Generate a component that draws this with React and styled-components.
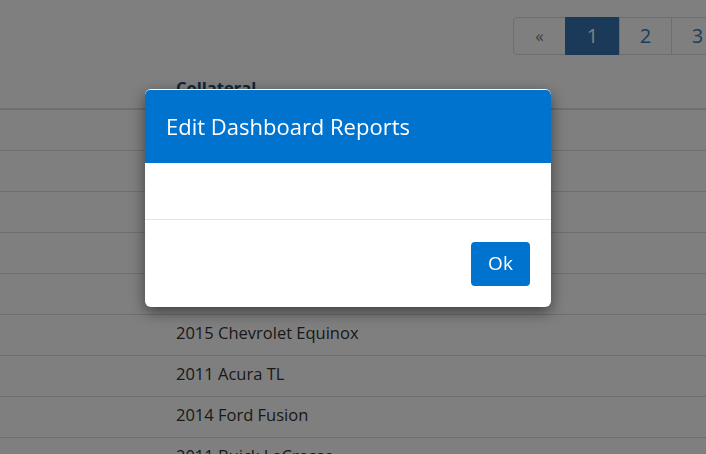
import styled, { createGlobalStyle } from "styled-components";

const GlobalStyle = createGlobalStyle`
  html, body {
    margin: 0;
    padding: 0;
    background: #fff;
    overflow: hidden;
    font-family: "Open Sans", "Liberation Sans", sans-serif;
    color: #333;
  }
`;

const Page = styled.div`
  width: 706px;
  height: 454px;
  overflow: hidden;
`;

const PagerRow = styled.div`
  display: flex;
  padding: 17px 0 0 514px;
  margin-bottom: 15px;
  white-space: nowrap;
`;

const PageCell = styled.a`
  flex-shrink: 0;
  box-sizing: border-box;
  width: ${(p) => p.$w}px;
  height: 38px;
  line-height: 36px;
  text-align: center;
  font-size: ${(p) => (p.$arrow ? "17px" : "20px")};
  color: ${(p) => (p.$active ? "#fff" : p.$arrow ? "#777" : "#337ab7")};
  background: ${(p) => (p.$active ? "#3674b4" : "#fff")};
  border: 1px solid ${(p) => (p.$active ? "#3674b4" : "#ddd")};
  margin-left: -1px;
  border-radius: ${(p) => (p.$first ? "4px 0 0 4px" : "0")};
`;

const Table = styled.table`
  width: 100%;
  border-collapse: collapse;
  font-size: 16.5px;
`;

const Th = styled.th`
  text-align: left;
  padding: 7px 8px 9px;
  line-height: 22px;
  font-weight: 700;
  color: #23466e;
  border-bottom: 2px solid #ddd;
  width: ${(p) => (p.$w ? `${p.$w}px` : "auto")};
`;

const Td = styled.td`
  padding: 7px 8px 11px;
  line-height: 22px;
  border-top: 1px solid #ddd;
  color: #333;
`;

const Overlay = styled.div`
  position: fixed;
  inset: 0;
  background: rgba(0, 0, 0, 0.5);
  padding: 89px 0 0 145px;
`;

const Dialog = styled.div`
  width: 406px;
  box-sizing: border-box;
  background: #fff;
  border-radius: 6px;
  padding-top: 1px;
  box-shadow: 0 5px 15px rgba(0, 0, 0, 0.5);
  overflow: hidden;
`;

const DialogHeader = styled.div`
  background: #0073cf;
  color: #fff;
  padding: 21px 21px 22px;
  border-radius: 5px 5px 0 0;
`;

const DialogTitle = styled.h4`
  margin: 0;
  font-size: 22px;
  font-weight: 400;
  line-height: 30px;
`;

const DialogBody = styled.div`
  height: 56px;
`;

const DialogFooter = styled.div`
  display: flex;
  justify-content: flex-end;
  padding: 22px 21px 21px;
  border-top: 1px solid #e5e5e5;
`;

const OkButton = styled.button`
  width: 59px;
  height: 44px;
  padding: 0 0 2px;
  border: none;
  border-radius: 4px;
  background: #0073cf;
  color: #fff;
  font-family: "Open Sans", "Liberation Sans", sans-serif;
  font-size: 19px;
  cursor: pointer;
`;

const rows = [
  "",
  "",
  "",
  "",
  "",
  "2015 Chevrolet Equinox",
  "2011 Acura TL",
  "2014 Ford Fusion",
  "2011 Buick LaCrosse",
];

const pages = [
  { label: "«", w: 53, arrow: true, first: true },
  { label: "1", w: 55, active: true },
  { label: "2", w: 53 },
  { label: "3", w: 53 },
  { label: "4", w: 53 },
];

export default function App() {
  return (
    <Page>
      <GlobalStyle />
      <PagerRow>
        {pages.map((p) => (
          <PageCell
            key={p.label}
            $w={p.w}
            $arrow={p.arrow}
            $active={p.active}
            $first={p.first}
          >
            {p.label}
          </PageCell>
        ))}
      </PagerRow>
      <Table>
        <thead>
          <tr>
            <Th $w={152}></Th>
            <Th>Collateral</Th>
          </tr>
        </thead>
        <tbody>
          {rows.map((r, i) => (
            <tr key={i}>
              <Td>&nbsp;</Td>
              <Td>{r}</Td>
            </tr>
          ))}
        </tbody>
      </Table>
      <Overlay>
        <Dialog>
          <DialogHeader>
            <DialogTitle>Edit Dashboard Reports</DialogTitle>
          </DialogHeader>
          <DialogBody />
          <DialogFooter>
            <OkButton>Ok</OkButton>
          </DialogFooter>
        </Dialog>
      </Overlay>
    </Page>
  );
}
